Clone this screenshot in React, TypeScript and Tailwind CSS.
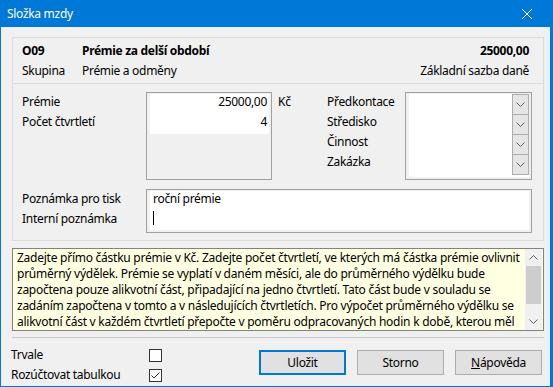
const helpLines = [
  "Zadejte přímo částku prémie v Kč. Zadejte počet čtvrtletí, ve kterých má částka prémie ovlivnit",
  "průměrný výdělek. Prémie se vyplatí v daném měsíci, ale do průměrného výdělku bude",
  "započtena pouze alikvotní část, připadající na jedno čtvrtletí. Tato část bude v souladu se",
  "zadáním započtena v tomto a v následujících čtvrtletích. Pro výpočet průměrného výdělku se",
  "alikvotní část v každém čtvrtletí přepočte v poměru odpracovaných hodin k době, kterou měl",
];

function Chevron({ up }: { up?: boolean }) {
  return (
    <svg width="9" height="5" viewBox="0 0 9 5" className="block">
      <path
        d={up ? "M0.5 4.5 L4.5 0.5 L8.5 4.5" : "M0.5 0.5 L4.5 4.5 L8.5 0.5"}
        fill="none"
        stroke="#606060"
        strokeWidth="1"
      />
    </svg>
  );
}

function DropButton({ first }: { first?: boolean }) {
  return (
    <div
      className={`h-[21px] border border-[#adadad] bg-[#e5e5e5] flex items-center justify-center ${first ? "" : "-mt-px"}`}
    >
      <Chevron />
    </div>
  );
}

function Checkbox({ checked }: { checked?: boolean }) {
  return (
    <div className="w-[13px] h-[13px] border border-[#333333] bg-white flex items-center justify-center">
      {checked && (
        <svg width="11" height="11" viewBox="0 0 11 11">
          <path d="M1.5 5.5 L4 8 L9.5 2.5" fill="none" stroke="#333333" strokeWidth="1" />
        </svg>
      )}
    </div>
  );
}

export default function App() {
  return (
    <div className="w-[553px] h-[387px] flex flex-col bg-[#0078d7] font-['Noto_Sans',sans-serif] text-[12px] tracking-[-0.3px] text-black">
      {/* title bar */}
      <div className="h-[27px] flex items-center pl-[7px] text-white">
        <span>Složka mzdy</span>
        <svg width="10" height="10" viewBox="0 0 10 10" className="ml-auto mr-[21px]">
          <path d="M0 0 L10 10 M10 0 L0 10" stroke="white" strokeWidth="1" />
        </svg>
      </div>

      <div className="flex-1 ml-px mr-[3px] mb-px bg-[#f0f0f0] flex flex-col">
        {/* main frame */}
        <div className="ml-[11px] mt-[10px] w-[532px] h-[204px] border border-[#dcdcdc] flex flex-col">
          <div className="pt-[3px] pb-[2px] pl-[9px] pr-[14px]">
            <div className="h-[20px] flex items-center font-bold">
              <span className="w-[60px]">O09</span>
              <span>Prémie za delší období</span>
              <span className="ml-auto">25000,00</span>
            </div>
            <div className="h-[20px] flex items-center">
              <span className="w-[60px]">Skupina</span>
              <span>Prémie a odměny</span>
              <span className="ml-auto">Základní sazba daně</span>
            </div>
          </div>
          <div className="h-px bg-[#dcdcdc]" />

          <div className="pt-[8px] pl-[9px] flex">
            <div className="w-[124px] leading-[20px]">
              <div>Prémie</div>
              <div>Počet čtvrtletí</div>
            </div>
            <div className="w-[126px] h-[88px] border border-[#a0a0a0] pt-px pl-[3px] pr-[2px]">
              <div className="h-[40px] bg-white leading-[16px] text-right pr-[2px]">
                <div className="h-[20px]">25000,00</div>
                <div className="h-[20px]">4</div>
              </div>
            </div>
            <div className="ml-[6px] w-[49px] leading-[20px]">Kč</div>
            <div className="w-[78px] leading-[20px]">
              <div>Předkontace</div>
              <div>Středisko</div>
              <div>Činnost</div>
              <div>Zakázka</div>
            </div>
            <div className="w-[127px] h-[88px] border border-[#a0a0a0] pt-px pl-[3px] pr-[2px] pb-[2px]">
              <div className="h-full bg-white flex justify-end">
                <div className="w-[17px]">
                  <DropButton first />
                  <DropButton />
                  <DropButton />
                  <DropButton />
                </div>
              </div>
            </div>
          </div>

          <div className="mt-[9px] pl-[9px] flex">
            <div className="w-[124px] leading-[20px]">
              <div>Poznámka pro tisk</div>
              <div>Interní poznámka</div>
            </div>
            <div className="w-[386px] h-[44px] border border-[#a0a0a0] pt-px pl-[3px] pr-[2px] pb-[2px]">
              <div className="h-full bg-white pl-[3px] leading-[16px]">
                <div>roční prémie</div>
                <div className="mt-[4px] w-px h-[14px] bg-black" />
              </div>
            </div>
          </div>
        </div>

        {/* help box */}
        <div className="ml-[11px] mt-[7px] w-[532px] h-[83px] border border-[#828282] bg-[#ffffe1] flex">
          <div className="flex-1 min-w-0 pl-[4px] pt-px leading-[16px] tracking-[-0.25px] whitespace-nowrap">
            {helpLines.map((l) => (
              <div key={l}>{l}</div>
            ))}
          </div>
          <div className="mr-px w-[17px] shrink-0 bg-[#f0f0f0] flex flex-col">
            <div className="h-[17px] flex items-center justify-center">
              <Chevron up />
            </div>
            <div className="h-[38px] mx-px bg-[#cdcdcd]" />
            <div className="mt-auto h-[17px] flex items-center justify-center">
              <Chevron />
            </div>
          </div>
        </div>

        <div className="ml-[11px] mt-[6px] w-[532px] h-px bg-[#c8c8c8]" />

        {/* bottom */}
        <div className="flex">
          <div className="w-[258px] pl-[10px] pt-[7px]">
            <div className="h-[20px] flex items-center">
              <span className="w-[138px]">Trvale</span>
              <Checkbox />
            </div>
            <div className="h-[20px] flex items-center">
              <span className="w-[138px]">Rozúčtovat tabulkou</span>
              <Checkbox checked />
            </div>
          </div>
          <div className="pt-[12px] flex gap-[11px]">
            <button className="w-[87px] h-[25px] border-2 border-[#0078d7] bg-[#e1e1e1]">Uložit</button>
            <button className="w-[87px] h-[25px] border border-[#adadad] bg-[#e1e1e1]">Storno</button>
            <button className="w-[87px] h-[25px] border border-[#adadad] bg-[#e1e1e1]">
              <span className="underline">N</span>ápověda
            </button>
          </div>
        </div>
      </div>
    </div>
  );
}
